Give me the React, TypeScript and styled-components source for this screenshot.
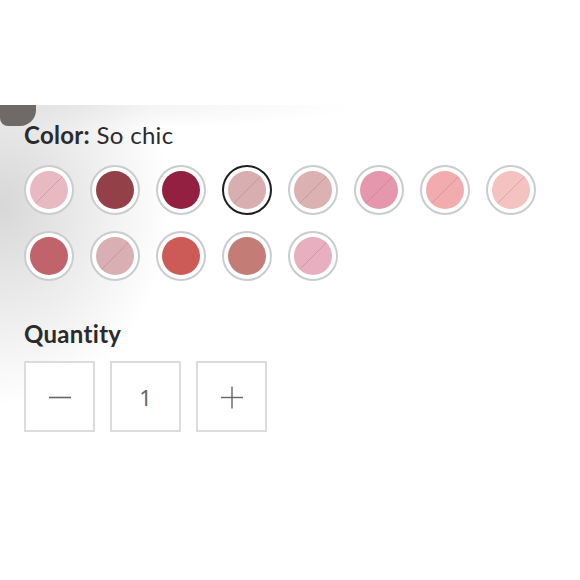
import React from 'react'
import styled, { createGlobalStyle } from 'styled-components'

const GlobalStyle = createGlobalStyle`
  html, body {
    margin: 0;
    padding: 0;
    background: #ffffff;
  }
  body {
    font-family: Lato, "Noto Sans", "Liberation Sans", sans-serif;
    color: #2b2b2d;
  }
`

interface Shade {
  name: string;
  color: string;
  soldOut?: boolean;
}

const shades: Shade[] = [
  { name: 'Ballet', color: '#e9b9c1', soldOut: true },
  { name: 'Bordeaux', color: '#934049' },
  { name: 'Berry', color: '#931f41' },
  { name: 'So chic', color: '#d9aeb1', soldOut: true },
  { name: 'Nude', color: '#dcb1b2', soldOut: true },
  { name: 'Peony', color: '#e598ad', soldOut: true },
  { name: 'Coral', color: '#f3acad', soldOut: true },
  { name: 'Blush', color: '#f4c3c1', soldOut: true },
  { name: 'Rosewood', color: '#c0636a' },
  { name: 'Petal', color: '#d9afb4', soldOut: true },
  { name: 'Terracotta', color: '#cc5a57' },
  { name: 'Cinnamon', color: '#c47d76' },
  { name: 'Candy', color: '#e8afc0', soldOut: true },
]

const selected = 'So chic'

const App = () => {
  return (
    <>
      <GlobalStyle />
      <Page>
        <Panel>
          <Notch />
          <Label>
            <strong>Color:</strong> {selected}
          </Label>
          <SwatchGrid>
            {shades.map((shade) => (
              <Swatch
                key={shade.name}
                title={shade.name}
                $active={shade.name === selected}
              >
                <Fill $color={shade.color} $soldOut={shade.soldOut} />
              </Swatch>
            ))}
          </SwatchGrid>
          <Label $spaced>
            <strong>Quantity</strong>
          </Label>
          <Stepper>
            <StepButton aria-label="Decrease">
              <svg width="24" height="24" viewBox="0 0 24 24">
                <line x1="1" y1="12.5" x2="23" y2="12.5" stroke="#666" strokeWidth="1.6" />
              </svg>
            </StepButton>
            <Count>1</Count>
            <StepButton aria-label="Increase">
              <svg width="24" height="24" viewBox="0 0 24 24">
                <line x1="1" y1="12.5" x2="23" y2="12.5" stroke="#666" strokeWidth="1.4" />
                <line x1="12" y1="1.5" x2="12" y2="23.5" stroke="#666" strokeWidth="1.4" />
              </svg>
            </StepButton>
          </Stepper>
        </Panel>
      </Page>
    </>
  )
}

export default App

const Page = styled.div`
  width: 580px;
  height: 580px;
  padding-top: 105px;
  box-sizing: border-box;
  overflow: hidden;
  background: #ffffff;
`

const Panel = styled.section`
  position: relative;
  height: 475px;
  padding: 15px 0 0 24px;
  box-sizing: border-box;
  background:
    radial-gradient(ellipse 170px 200px at 0 100px, rgba(198, 198, 198, 0.7), rgba(255, 255, 255, 0) 100%),
    radial-gradient(ellipse 300px 24px at 60px 0, rgba(230, 230, 230, 0.6), rgba(255, 255, 255, 0) 100%),
    #ffffff;
`

const Notch = styled.div`
  position: absolute;
  top: 0;
  left: 0;
  width: 36px;
  height: 21px;
  background: #6f6967;
  border-bottom-right-radius: 16px;
  border-bottom-left-radius: 8px;
`

const Label = styled.h2<{ $spaced?: boolean }>`
  margin: ${({ $spaced }) => ($spaced ? '38px 0 0' : '0')};
  font-size: 24px;
  line-height: 30px;
  font-weight: 400;
  letter-spacing: 0.3px;
  color: #2b2b2d;

  strong {
    font-weight: 700;
  }
`

const SwatchGrid = styled.div`
  display: grid;
  grid-template-columns: repeat(8, 50px);
  gap: 16px;
  margin-top: 15px;
`

const Swatch = styled.button<{ $active?: boolean }>`
  width: 50px;
  height: 50px;
  padding: 0;
  display: flex;
  align-items: center;
  justify-content: center;
  border-radius: 50%;
  border: ${({ $active }) => ($active ? '2.5px solid #1f1f1f' : '2px solid #c9cdcd')};
  background: #ffffff;
  box-sizing: border-box;
  cursor: pointer;
`

const Fill = styled.span<{ $color: string; $soldOut?: boolean }>`
  width: 38px;
  height: 38px;
  border-radius: 50%;
  background: ${({ $color, $soldOut }) =>
    $soldOut
      ? `linear-gradient(135deg, transparent calc(50% - 0.5px), rgba(160, 110, 120, 0.35) 50%, transparent calc(50% + 0.5px)), ${$color}`
      : $color};
`

const Stepper = styled.div`
  display: flex;
  gap: 15px;
  margin-top: 12px;
`

const StepButton = styled.button`
  width: 71px;
  height: 71px;
  display: flex;
  align-items: center;
  justify-content: center;
  padding: 0;
  background: #ffffff;
  border: 2px solid #dcdcdc;
  box-sizing: border-box;
  cursor: pointer;
`

const Count = styled.div`
  width: 71px;
  height: 71px;
  display: flex;
  align-items: center;
  justify-content: center;
  border: 2px solid #dcdcdc;
  box-sizing: border-box;
  background: #ffffff;
  font-family: "Noto Sans", Lato, sans-serif;
  font-size: 22px;
  font-weight: 400;
  color: #666666;
`
